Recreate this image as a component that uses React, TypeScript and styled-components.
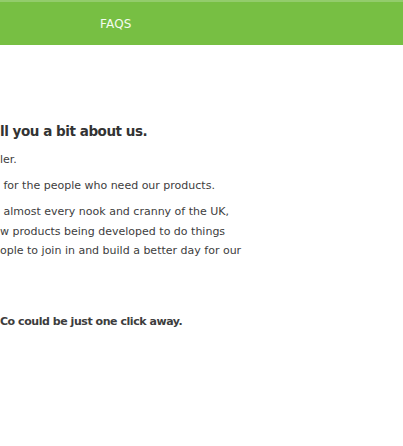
import React from "react";
import styled, { createGlobalStyle } from "styled-components";

const GlobalStyle = createGlobalStyle`
  html, body {
    margin: 0;
    padding: 0;
    background: #ffffff;
  }
  body {
    font-family: "DejaVu Sans", "Noto Sans", sans-serif;
    width: 403px;
    height: 446px;
    overflow: hidden;
  }
`;

const NavBar = styled.nav`
  height: 45px;
  background: #77bf43;
  border-top: 2px solid #93cc6c;
  box-sizing: border-box;
  display: flex;
  align-items: center;
  padding-left: 100px;
`;

const NavLink = styled.a`
  color: #f4fbef;
  font-size: 12px;
  letter-spacing: 0.2px;
  text-decoration: none;
`;

const Content = styled.main`
  padding-top: 78px;
  overflow: hidden;
  white-space: nowrap;
`;

const Heading = styled.h2`
  margin: 0 0 11px 0;
  font-size: 13.5px;
  letter-spacing: -0.45px;
  font-weight: bold;
  color: #333333;
`;

const Para = styled.p<{ $gap?: number; $bold?: boolean }>`
  margin: 0 0 ${({ $gap }) => $gap ?? 12}px 0;
  font-size: 11px;
  line-height: 19.5px;
  color: #3d3d3d;
  font-weight: ${({ $bold }) => ($bold ? "bold" : "normal")};
  letter-spacing: ${({ $bold }) => ($bold ? "-0.45px" : "0")};
`;

export default function App() {
  return (
    <>
      <GlobalStyle />
      <NavBar>
        <NavLink href="#">FAQS</NavLink>
      </NavBar>
      <Content>
        <Heading>ll you a bit about us.</Heading>
        <Para $gap={6}>ler.</Para>
        <Para $gap={7}>&nbsp;for the people who need our products.</Para>
        <Para $gap={51}>
          &nbsp;almost every nook and cranny of the UK,
          <br />w products being developed to do things
          <br />ople to join in and build a better day for our
        </Para>
        <Para $bold>Co could be just one click away.</Para>
      </Content>
    </>
  );
}
